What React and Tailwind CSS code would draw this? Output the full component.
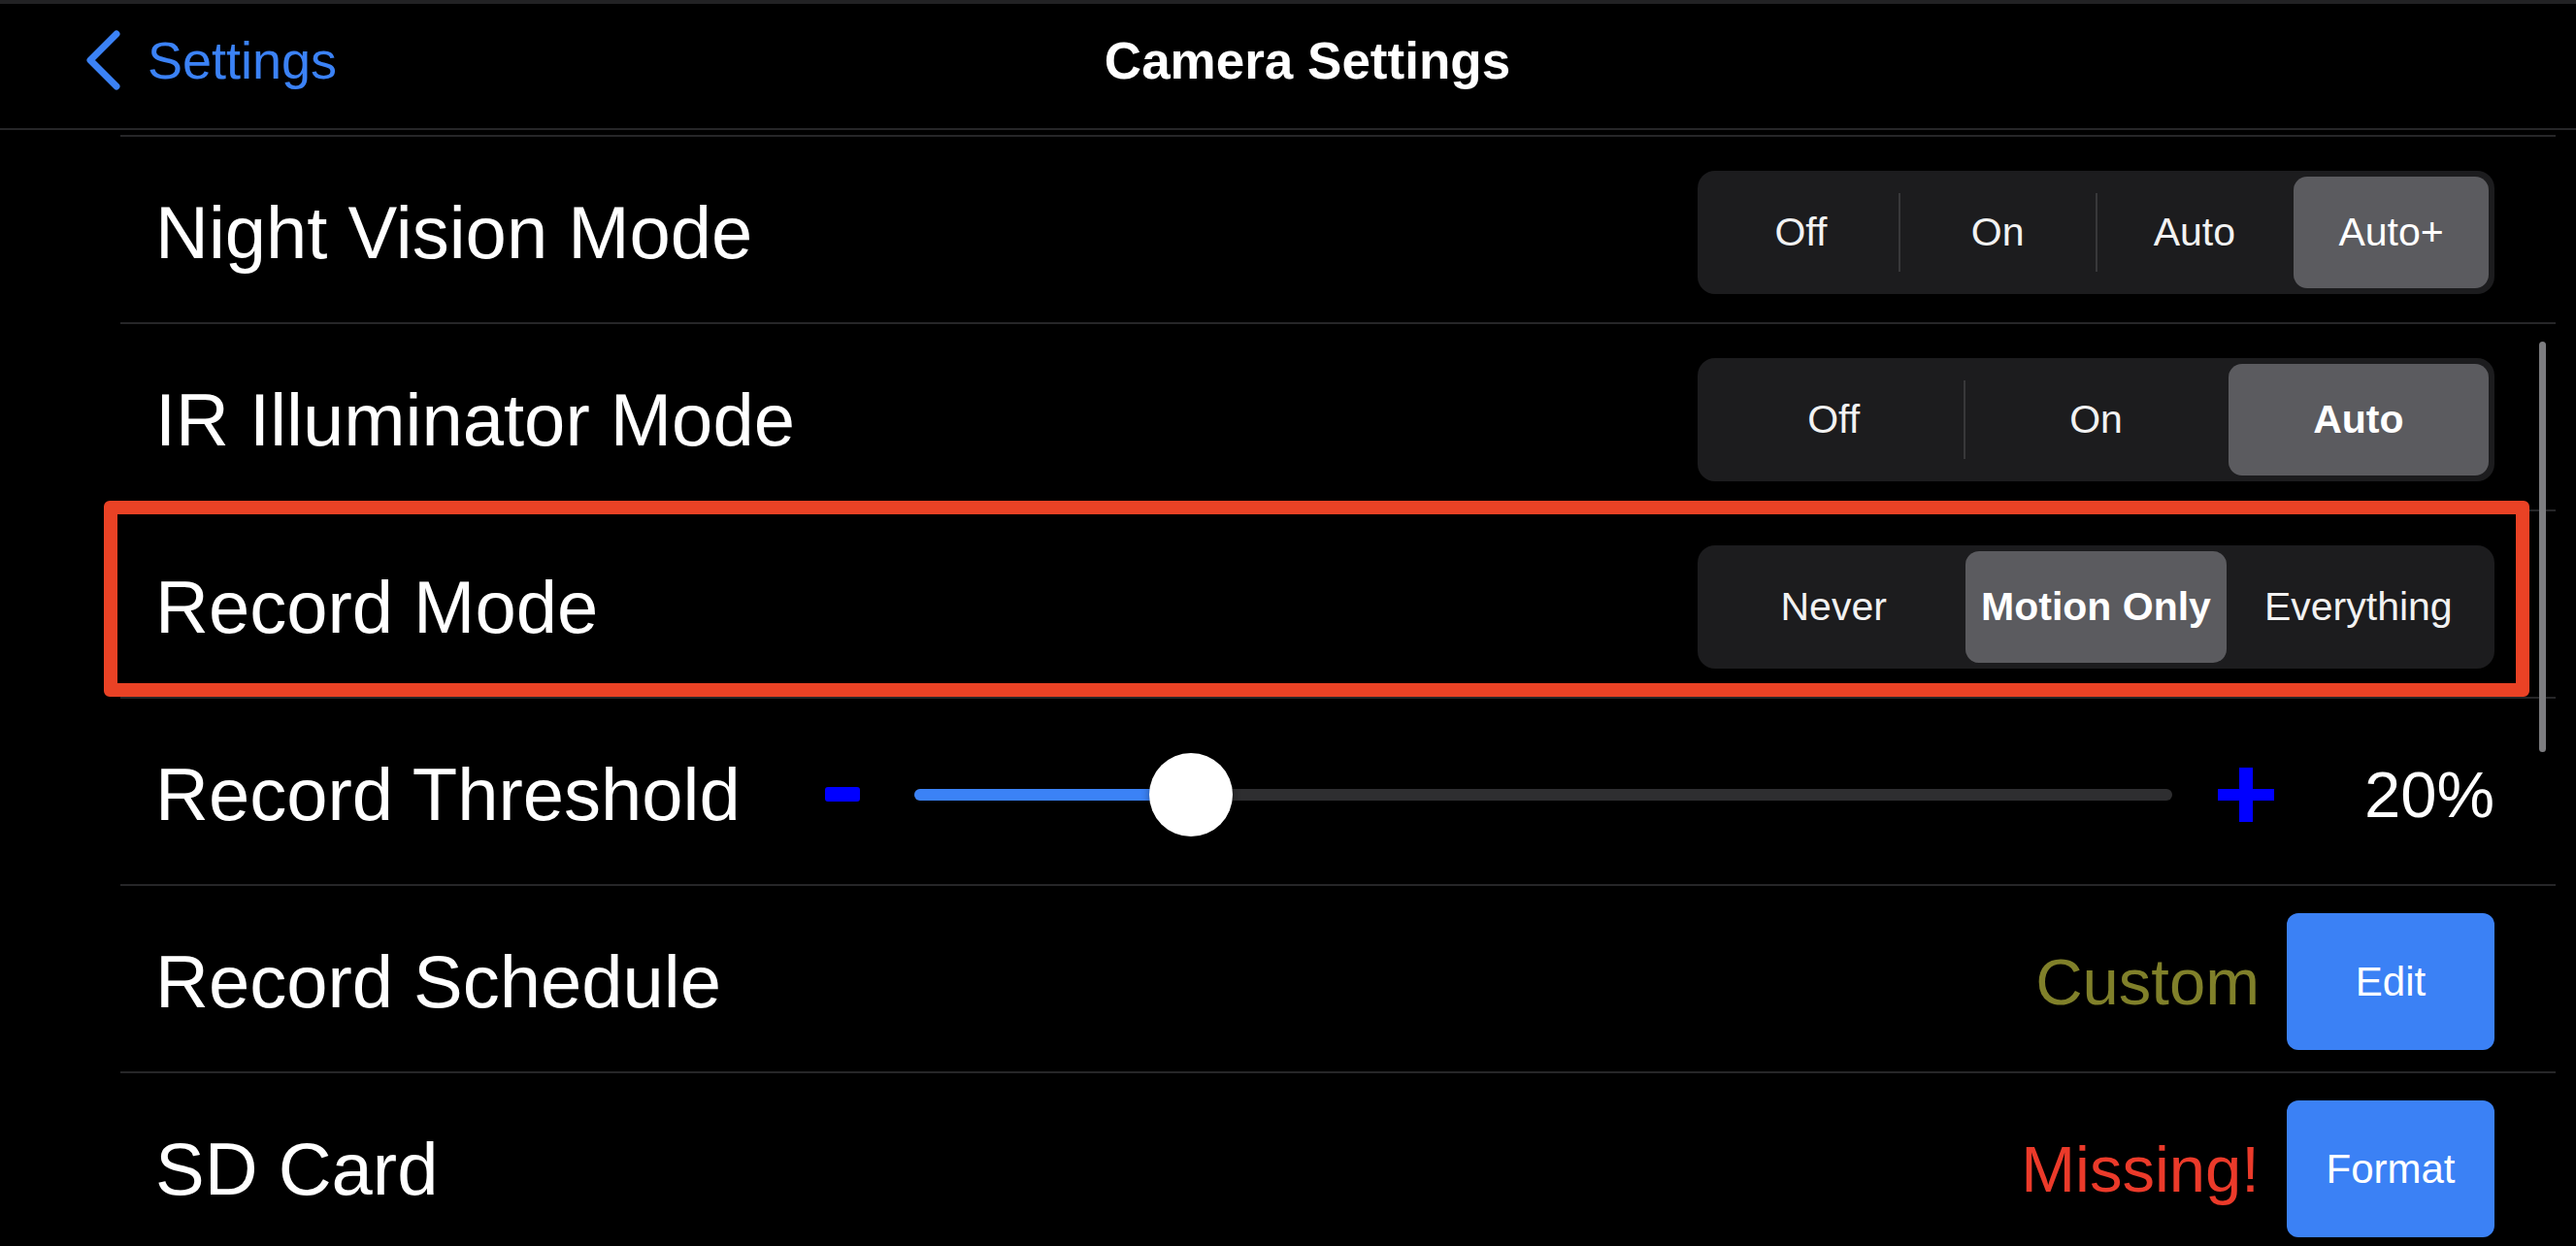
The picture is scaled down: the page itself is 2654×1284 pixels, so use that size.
import React from "react";

const Segmented = ({ options, selected, boldSelected = true }) => {
  return (
    <div className="flex h-[127px] w-[821px] items-stretch rounded-[18px] bg-[#1c1c1e] p-[6px]">
      {options.map((opt, i) => {
        const isSel = i === selected;
        const showDivider = i > 0 && i !== selected && i - 1 !== selected;
        return (
          <React.Fragment key={opt}>
            {i > 0 && (
              <div
                className={
                  showDivider
                    ? "my-[17px] w-[2px] flex-none bg-[#38383a]"
                    : "my-[17px] w-[2px] flex-none bg-transparent"
                }
              />
            )}
            <div
              className={
                isSel
                  ? boldSelected
                    ? "flex flex-1 items-center justify-center rounded-[14px] bg-[#5b5b5f] text-[41px] font-bold text-white"
                    : "flex flex-1 items-center justify-center rounded-[14px] bg-[#5b5b5f] text-[41px] text-white"
                  : "flex flex-1 items-center justify-center text-[41px] text-[#f2f2f2]"
              }
            >
              {opt}
            </div>
          </React.Fragment>
        );
      })}
    </div>
  );
};

const Row = ({ label, children }) => (
  <div className="flex h-[193px] items-center border-b-2 border-[#262628] pl-[36px] pr-[63px] pt-[6px]">
    <span className="flex-none text-[76px] leading-none text-white">{label}</span>
    <div className="ml-auto flex items-center">{children}</div>
  </div>
);

const ActionButton = ({ children }) => (
  <button className="flex h-[141px] w-[214px] items-center justify-center rounded-[12px] bg-[#3b81f5] text-[42px] text-white">
    {children}
  </button>
);

export default function App() {
  const value = 20;
  return (
    <div className="relative h-[1284px] w-full overflow-hidden bg-black font-['Liberation_Sans',Arial,sans-serif]">
      <div className="h-[4px] bg-[#222224]" />

      {/* nav bar */}
      <div className="grid h-[130px] grid-cols-[1fr_auto_1fr] items-center border-b-2 border-[#262628] pb-[12px]">
        <div className="flex items-center pl-[86px]">
          <svg width="40" height="62" viewBox="0 0 40 62" fill="none">
            <path
              d="M34 4 L7 31 L34 58"
              stroke="#3b82f6"
              strokeWidth="7"
              strokeLinecap="round"
              strokeLinejoin="round"
            />
          </svg>
          <span className="ml-[26px] text-[54px] leading-none text-[#3b82f6]">Settings</span>
        </div>
        <div className="pl-[40px] text-[53px] font-bold leading-none text-white">Camera Settings</div>
        <div />
      </div>

      {/* list */}
      <div className="ml-[124px] mt-[5px] w-[2509px] border-t-2 border-[#262628]">
        <Row label="Night Vision Mode">
          <Segmented options={["Off", "On", "Auto", "Auto+"]} selected={3} boldSelected={false} />
        </Row>
        <Row label="IR Illuminator Mode">
          <Segmented options={["Off", "On", "Auto"]} selected={2} />
        </Row>
        <Row label="Record Mode">
          <Segmented options={["Never", "Motion Only", "Everything"]} selected={1} />
        </Row>

        {/* threshold slider */}
        <div className="flex h-[193px] items-center border-b-2 border-[#262628] pl-[36px] pr-[63px] pt-[6px]">
          <span className="w-[690px] flex-none text-[76px] leading-none text-white">Record Threshold</span>
          <div className="h-[15px] w-[36px] flex-none rounded-[3px] bg-[#0000ff]" />
          <div className="relative ml-[56px] flex h-[86px] flex-1 items-center">
            <div className="flex h-[12px] w-full overflow-hidden rounded-full bg-[#2e2e30]">
              <div className="h-full bg-[#3b82f6]" style={{ width: `calc(${value}% - ${value * 0.86}px + 43px)` }} />
            </div>
            <div
              className="absolute top-0 h-[86px] w-[86px] rounded-full bg-white shadow-[0_2px_8px_rgba(0,0,0,0.4)]"
              style={{ left: `calc(${value}% - ${value * 0.86}px)` }}
            />
          </div>
          <svg className="ml-[47px] flex-none" width="58" height="56" viewBox="0 0 58 56">
            <rect x="0" y="22" width="58" height="12" fill="#0000ff" />
            <rect x="22" y="0" width="14" height="56" fill="#0000ff" />
          </svg>
          <span className="w-[227px] flex-none text-right text-[67px] leading-none text-white">{value}%</span>
        </div>

        <Row label="Record Schedule">
          <span className="mr-[28px] text-[67px] leading-none text-[#80802a]">Custom</span>
          <ActionButton>Edit</ActionButton>
        </Row>
        <Row label="SD Card">
          <span className="mr-[28px] text-[67px] leading-none text-[#eb3a2a]">Missing!</span>
          <ActionButton>Format</ActionButton>
        </Row>
      </div>

      {/* scroll indicator */}
      <div className="absolute left-[2616px] top-[352px] h-[423px] w-[7px] rounded-full bg-[#7d7d80]" />

      {/* highlight annotation */}
      <div className="pointer-events-none absolute left-[107px] top-[516px] h-[202px] w-[2499px] rounded-[6px] border-[14px] border-[#ea4225]" />
    </div>
  );
}
